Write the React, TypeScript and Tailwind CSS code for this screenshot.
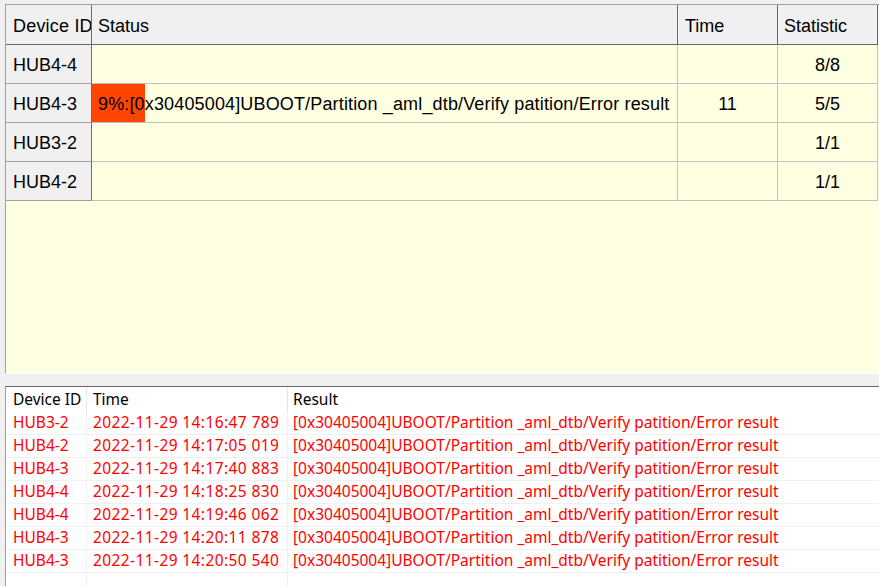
import React from "react";

const topRows = [
  { id: "HUB4-4", status: "", pct: 0, time: "", stat: "8/8" },
  { id: "HUB4-3", status: "9%:[0x30405004]UBOOT/Partition _aml_dtb/Verify patition/Error result", pct: 9, time: "11", stat: "5/5" },
  { id: "HUB3-2", status: "", pct: 0, time: "", stat: "1/1" },
  { id: "HUB4-2", status: "", pct: 0, time: "", stat: "1/1" },
];

const logRows = [
  ["HUB3-2", "2022-11-29 14:16:47 789"],
  ["HUB4-2", "2022-11-29 14:17:05 019"],
  ["HUB4-3", "2022-11-29 14:17:40 883"],
  ["HUB4-4", "2022-11-29 14:18:25 830"],
  ["HUB4-4", "2022-11-29 14:19:46 062"],
  ["HUB4-3", "2022-11-29 14:20:11 878"],
  ["HUB4-3", "2022-11-29 14:20:50 540"],
];

const msg = "[0x30405004]UBOOT/Partition _aml_dtb/Verify patition/Error result";

export default function App() {
  return (
    <div className="w-[879px] h-[586px] bg-[#f0f0f0] overflow-hidden flex flex-col font-['Liberation_Sans',Arial,sans-serif] text-black">
      {/* Top grid panel */}
      <div className="mt-[4px] ml-[5px] h-[370px] border-t border-l border-[#a0a0a0] bg-[#ffffe1] border-b border-b-white flex flex-col">
        <div className="flex h-[40px] bg-[#f0f0f0] text-[18px] leading-none">
          <div className="w-[86px] border-r border-b border-[#696969] pl-[7px] pt-[2px] flex items-center overflow-hidden whitespace-nowrap">
            <span className="tracking-[0.2px]">Device ID</span>
          </div>
          <div className="w-[586px] border-r border-b border-[#696969] px-[6px] pt-[2px] flex items-center">Status</div>
          <div className="w-[100px] border-r border-b border-[#696969] px-[7px] pt-[2px] flex items-center">Time</div>
          <div className="w-[100px] border-r border-b border-[#696969] px-[6px] pt-[2px] flex items-center">Statistic</div>
        </div>
        {topRows.map((r) => (
          <div key={r.id} className="flex h-[39px] text-[18px] leading-none">
            <div className="w-[86px] bg-[#f0f0f0] border-r border-[#696969] border-b border-b-[#a0a0a0] pl-[7px] pt-[2px] flex items-center whitespace-nowrap overflow-hidden">
              {r.id}
            </div>
            <div className="relative w-[586px] border-r border-b border-[#c0c0c0] flex items-center whitespace-nowrap overflow-hidden">
              {r.pct > 0 && (
                <div className="absolute left-0 top-0 bottom-0 bg-[#ff4500]" style={{ width: `${r.pct}%` }} />
              )}
              <span className="relative pl-[6px] pt-[2px] tracking-[0.15px]">{r.status}</span>
            </div>
            <div className="w-[100px] border-r border-b border-[#c0c0c0] pt-[2px] flex items-center justify-center">{r.time}</div>
            <div className="w-[100px] border-r border-b border-[#c0c0c0] pt-[2px] flex items-center justify-center">{r.stat}</div>
          </div>
        ))}
      </div>

      {/* Bottom log panel */}
      <div className="mt-[12px] ml-[5px] flex-1 border-t border-[#646464] border-l border-l-[#a0a0a0] bg-white font-['Noto_Sans',Tahoma,sans-serif] text-[15.5px] leading-none overflow-hidden">
        <div className="flex h-[25px] items-center text-black">
          <div className="w-[81px] h-full pl-[7px] border-r border-[#e5e5e5] flex items-center">Device ID</div>
          <div className="w-[201px] h-full pl-[6px] border-r border-[#e5e5e5] flex items-center">Time</div>
          <div className="flex-1 h-full pl-[5px] flex items-center">Result</div>
        </div>
        {logRows.map(([id, t], i) => (
          <div key={i} className="flex h-[23px] text-[#ff0000] border-b border-[#f0f0f0]">
            <div className="w-[81px] pl-[7px] border-r border-[#f0f0f0] flex items-center whitespace-nowrap overflow-hidden">{id}</div>
            <div className="w-[201px] pl-[6px] border-r border-[#f0f0f0] flex items-center whitespace-nowrap overflow-hidden">
              <span className="tracking-[0.4px]">{t}</span>
            </div>
            <div className="flex-1 pl-[5px] flex items-center whitespace-nowrap">{msg}</div>
          </div>
        ))}
        <div className="flex h-[23px]">
          <div className="w-[81px] border-r border-[#f0f0f0]" />
          <div className="w-[201px] border-r border-[#f0f0f0]" />
          <div className="flex-1" />
        </div>
      </div>
    </div>
  );
}
